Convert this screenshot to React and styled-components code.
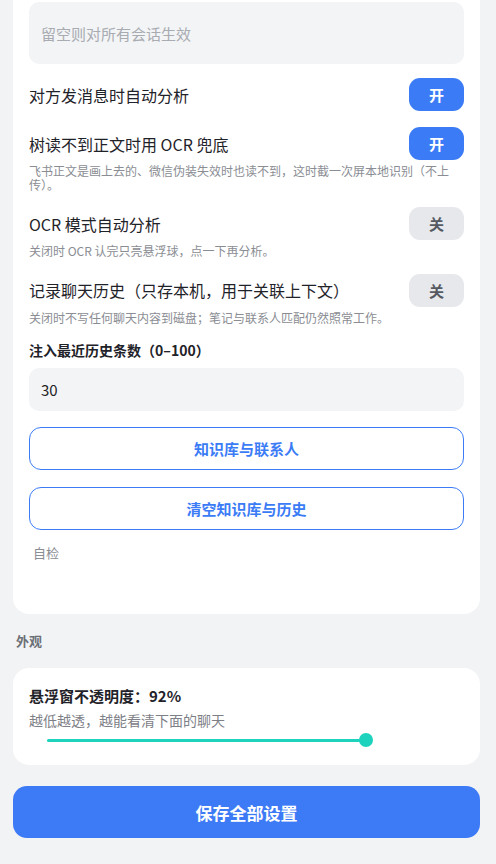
import React from "react"
import styled, { createGlobalStyle } from "styled-components"

const GlobalStyle = createGlobalStyle`
  html, body {
    margin: 0;
    padding: 0;
    background: #f2f3f5;
    font-family: "Noto Sans CJK SC", "Noto Sans", sans-serif;
  }
  * { box-sizing: border-box; }
`

const settings = [
  { title: "对方发消息时自动分析", on: true },
  {
    title: "树读不到正文时用 OCR 兜底",
    on: true,
    desc: "飞书正文是画上去的、微信伪装失效时也读不到，这时截一次屏本地识别（不上传）。",
  },
  {
    title: "OCR 模式自动分析",
    on: false,
    desc: "关闭时 OCR 认完只亮悬浮球，点一下再分析。",
  },
  {
    title: "记录聊天历史（只存本机，用于关联上下文）",
    on: false,
    desc: "关闭时不写任何聊天内容到磁盘；笔记与联系人匹配仍然照常工作。",
  },
]

const opacity = 92
const sliderMin = 20
const sliderMax = 110

const App = () => {
  const fill = ((opacity - sliderMin) / (sliderMax - sliderMin)) * 100
  return (
    <Page>
      <GlobalStyle />
      <Card $scrolled>
        <TextField placeholder="留空则对所有会话生效" $tall />
        <SettingList>
          {settings.map((item, index) => (
            <Setting key={index}>
              <Row>
                <RowTitle>{item.title}</RowTitle>
                <Toggle $on={item.on}>{item.on ? "开" : "关"}</Toggle>
              </Row>
              {item.desc && <Desc>{item.desc}</Desc>}
            </Setting>
          ))}
        </SettingList>
        <FieldLabel>注入最近历史条数（0–100）</FieldLabel>
        <TextField defaultValue="30" />
        <OutlineButton>知识库与联系人</OutlineButton>
        <OutlineButton>清空知识库与历史</OutlineButton>
        <SelfCheck>自检</SelfCheck>
      </Card>

      <SectionLabel>外观</SectionLabel>
      <Card>
        <FieldLabel $large>悬浮窗不透明度：{opacity}%</FieldLabel>
        <SliderDesc>越低越透，越能看清下面的聊天</SliderDesc>
        <Slider>
          <Track style={{ width: `${fill}%` }}>
            <Thumb />
          </Track>
        </Slider>
      </Card>

      <SaveButton>保存全部设置</SaveButton>
    </Page>
  )
}

export default App

const Page = styled.div`
  padding: 0 16px 26px 13px;
  width: 496px;
  overflow: hidden;
`

const Card = styled.div`
  background: #fff;
  border-radius: 16px;
  padding: 18px 16px 14px;
  display: flex;
  flex-direction: column;

  ${(p) =>
    p.$scrolled &&
    `
    margin-top: -14px;
    padding: 16px 16px 52px;
  `}
`

const TextField = styled.input`
  width: 100%;
  height: ${(p) => (p.$tall ? "62px" : "43px")};
  border: none;
  outline: none;
  border-radius: 10px;
  background: #f3f4f6;
  padding: 0 12px;
  font-family: inherit;
  font-size: 15px;
  color: #222;

  &::placeholder {
    color: #a8abb1;
  }
`

const SettingList = styled.div`
  display: flex;
  flex-direction: column;
  gap: 16px;
  margin-top: 14px;
`

const Setting = styled.div`
  display: flex;
  flex-direction: column;
`

const Row = styled.div`
  display: flex;
  align-items: center;
  justify-content: space-between;
  gap: 12px;
`

const RowTitle = styled.div`
  font-size: 16px;
  color: #1f2329;
  line-height: 22px;
`

const Toggle = styled.button`
  flex-shrink: 0;
  width: 55px;
  height: 33px;
  border: none;
  border-radius: 11px;
  background: ${(p) => (p.$on ? "#3b7cf6" : "#e6e8ec")};
  color: ${(p) => (p.$on ? "#fff" : "#555a62")};
  font-family: inherit;
  font-size: 15px;
  font-weight: 700;
  padding: 0;
`

const Desc = styled.div`
  margin-top: 4px;
  font-size: 12px;
  line-height: 13.5px;
  color: #8a8d93;
`

const FieldLabel = styled.div`
  font-size: ${(p) => (p.$large ? "15px" : "14px")};
  font-weight: 700;
  color: #1f2329;
  line-height: 20px;
  margin: ${(p) => (p.$large ? "0" : "16px 0 8px")};
`

const OutlineButton = styled.button`
  margin-top: 16px;
  width: 100%;
  height: 43px;
  border: 1px solid #3b7cf6;
  border-radius: 12px;
  background: #fff;
  color: #3b7cf6;
  font-family: inherit;
  font-size: 15px;
  font-weight: 700;

  & + & {
    margin-top: 17px;
  }
`

const SelfCheck = styled.div`
  margin-top: 14px;
  padding-left: 4px;
  font-size: 13px;
  line-height: 18px;
  color: #8a8d93;
`

const SectionLabel = styled.div`
  padding: 18px 3px 18px;
  font-size: 13px;
  font-weight: 700;
  line-height: 18px;
  color: #6b6f76;
`

const SliderDesc = styled.div`
  margin-top: 4px;
  font-size: 14px;
  line-height: 20px;
  color: #7d8087;
`

const Slider = styled.div`
  margin: 2px 18px 3px;
  height: 16px;
  display: flex;
  align-items: center;
`

const Track = styled.div`
  position: relative;
  height: 3px;
  border-radius: 2px;
  background: #1dd3bd;
`

const Thumb = styled.div`
  position: absolute;
  right: -7px;
  top: 50%;
  width: 14px;
  height: 14px;
  margin-top: -7px;
  border-radius: 50%;
  background: #1dd3bd;
`

const SaveButton = styled.button`
  margin-top: 21px;
  width: 100%;
  height: 52px;
  border: none;
  border-radius: 14px;
  background: #3d7af6;
  color: #fff;
  font-family: inherit;
  font-size: 17px;
  font-weight: 700;
`
